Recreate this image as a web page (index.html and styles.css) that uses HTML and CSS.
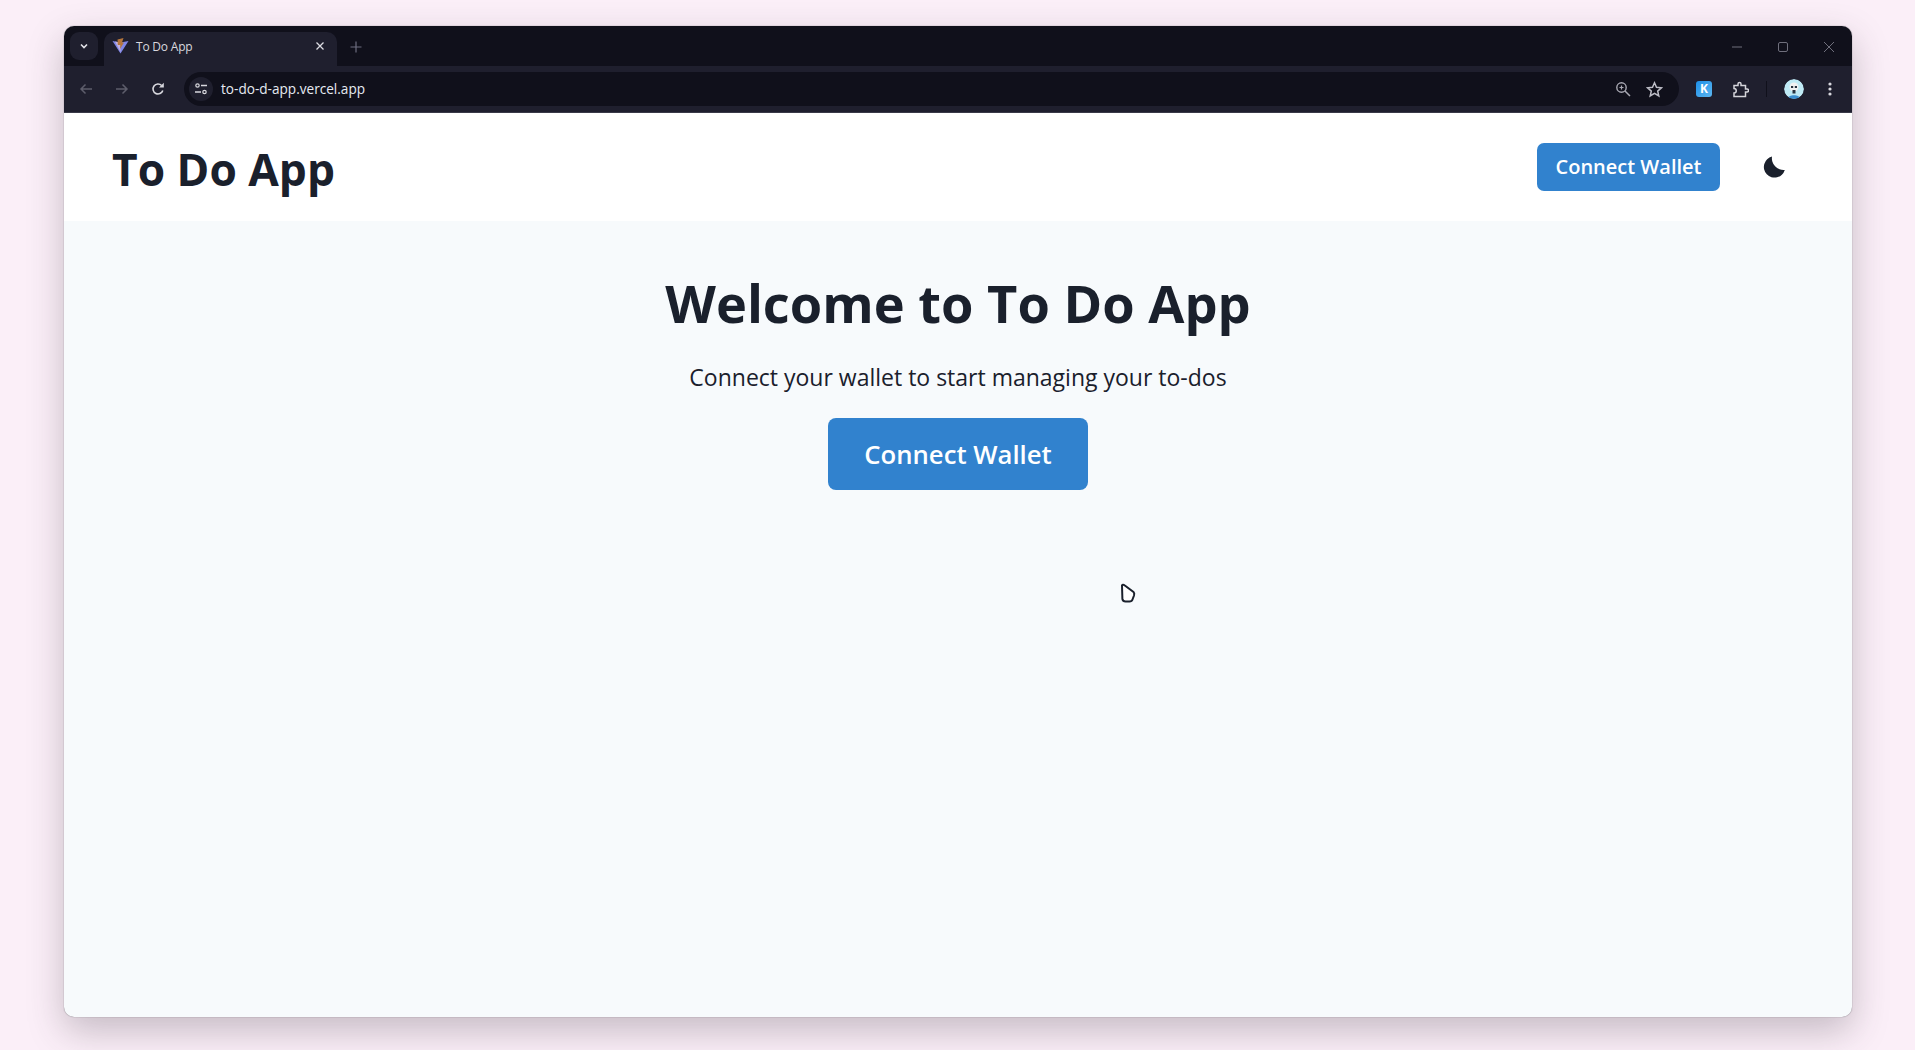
FILE: index.html
```html
<!DOCTYPE html>
<html lang="en">
<head>
<meta charset="utf-8">
<title>To Do App</title>
<link rel="stylesheet" href="styles.css">
</head>
<body>
<div class="window">
  <div class="titlebar">
    <div class="tab-search"><svg width="10" height="10" viewBox="0 0 10 10"><path d="M2 3.500 5 6.500 8 3.500" fill="none" stroke="#e4e4ea" stroke-width="1.600"/></svg></div>
    <div class="tab">
      <svg class="favicon" width="17" height="16" viewBox="0 0 17 16"><path d="M0.500 3 8.500 4.500 16.500 3 8.500 15.500Z" fill="#7f86e8"/><path d="M3 3.500 8.500 4.500 8.500 14Z" fill="#c4b2dc"/><path d="M5.500 1.500 11.500 0 10 4.500 12 4.500 8 11 8.300 7 5.800 7Z" fill="#b5763c"/></svg>
      <span class="tab-title">To Do App</span>
      <svg class="tab-close" width="10" height="10" viewBox="0 0 10 10"><path d="M1.500 1.500 8.500 8.500M8.500 1.500 1.500 8.500" stroke="#dcdce2" stroke-width="1.300"/></svg>
    </div>
    <svg class="new-tab" width="12" height="12" viewBox="0 0 12 12"><path d="M6 .5V11.500M.5 6H11.500" stroke="#6d6d80" stroke-width="1.200"/></svg>
    <div class="win-controls">
      <svg width="12" height="12" viewBox="0 0 12 12"><path d="M1 6H11" stroke="#6f6f7c" stroke-width="1"/></svg>
      <svg width="12" height="12" viewBox="0 0 12 12"><rect x="1.500" y="1.500" width="9" height="9" rx="1.500" fill="none" stroke="#6f6f7c"/></svg>
      <svg width="12" height="12" viewBox="0 0 12 12"><path d="M1 1 11 11M11 1 1 11" stroke="#6f6f7c"/></svg>
    </div>
  </div>
  <div class="toolbar">
    <svg class="nav nav-back" width="16" height="16" viewBox="0 0 16 16"><path d="M14 8H3M7.500 3.500 3 8l4.500 4.500" fill="none" stroke="#5d5d6b" stroke-width="1.500"/></svg>
    <svg class="nav nav-forward" width="16" height="16" viewBox="0 0 16 16"><path d="M2 8H13M8.500 3.500 13 8l-4.500 4.500" fill="none" stroke="#5d5d6b" stroke-width="1.500"/></svg>
    <svg class="nav nav-reload" width="16" height="16" viewBox="0 0 16 16"><path d="M12.800 9.500A5 5 0 1 1 11.600 4.500" fill="none" stroke="#d8d8de" stroke-width="1.600"/><path d="M9 6.500h4.800V1.800Z" fill="#d8d8de"/></svg>
    <div class="omnibox">
      <div class="site-info"><svg width="16" height="16" viewBox="0 0 16 16"><circle cx="4.500" cy="4.500" r="1.700" fill="none" stroke="#d8d8de" stroke-width="1.200"/><path d="M8 4.500H14M2 11H8" stroke="#d8d8de" stroke-width="1.400"/><circle cx="11.500" cy="11" r="1.700" fill="none" stroke="#d8d8de" stroke-width="1.200"/></svg></div>
      <span class="url">to-do-d-app.vercel.app</span>
      <div class="omni-actions">
        <svg width="16" height="16" viewBox="0 0 16 16"><circle cx="6.500" cy="6.500" r="4.700" fill="none" stroke="#a9a9b3" stroke-width="1.400"/><path d="M10 10 15 15" stroke="#a9a9b3" stroke-width="1.500"/><path d="M4.500 6.500H8.500M6.500 4.500V8.500" stroke="#a9a9b3" stroke-width="1.200"/></svg>
        <svg width="17" height="17" viewBox="0 0 17 17"><path d="M8.500 1.800 10.500 6.300 15.400 6.800 11.700 10.100 12.800 15 8.500 12.400 4.200 15 5.300 10.100 1.600 6.800 6.500 6.300Z" fill="none" stroke="#bdbdc6" stroke-width="1.500"/></svg>
      </div>
    </div>
    <div class="ext-k">K</div>
    <svg class="ext-puzzle" width="17" height="17" viewBox="0 0 17 17"><path d="M2 4.500H6V3a1.500 1.500 0 0 1 3 0V4.500H13.500V8H15a1.500 1.500 0 0 1 0 3H13.500V15.500H2V12a1.500 1.500 0 0 0 0-4.500Z" fill="none" stroke="#d4d4da" stroke-width="1.500"/></svg>
    <div class="divider"></div>
    <div class="avatar"><svg width="20" height="20" viewBox="0 0 20 20"><circle cx="10" cy="10" r="10" fill="#bfeaf5"/><path d="M3.500 20C4 15 16 15 16.500 20Z" fill="#3b8fd0"/><circle cx="10" cy="8" r="4.500" fill="#f1f1f1"/><path d="M7 7h2.200v2H7ZM10.800 7H13v2h-2.200ZM8.500 11h3v3.500h-3Z" fill="#27323f"/></svg></div>
    <svg class="menu" width="4" height="14" viewBox="0 0 4 14"><circle cx="2" cy="2" r="1.600" fill="#d8d8de"/><circle cx="2" cy="7" r="1.600" fill="#d8d8de"/><circle cx="2" cy="12" r="1.600" fill="#d8d8de"/></svg>
  </div>
  <header class="app-header">
    <h1 class="app-title">To Do App</h1>
    <div class="header-actions">
      <button class="btn btn-small">Connect Wallet</button>
      <svg class="moon" width="22" height="22" viewBox="0 0 22 22"><path d="M9 .5A10.700 10.700 0 1 0 21.800 14 11.800 11.800 0 0 1 9 .5Z" fill="#1a202c"/></svg>
    </div>
  </header>
  <main class="hero">
    <h2 class="hero-title">Welcome to To Do App</h2>
    <p class="hero-text">Connect your wallet to start managing your to-dos</p>
    <button class="btn btn-large">Connect Wallet</button>
    <svg class="cursor" width="18" height="20" viewBox="0 0 18 20"><path d="M3 2.500C3.500 1.500 4.500 1.500 5.500 2.300L14.500 9C15.500 10 15.500 11 15 12.500L13.500 16.500C13 18 12 18.500 10.500 18.500H6.500C4.500 18.500 3.700 17.500 3.400 16Z" fill="#fff" stroke="#1a202c" stroke-width="2"/></svg>
  </main>
</div>
</body>
</html>
```
FILE: styles.css
```css
* { box-sizing: border-box; }
html, body { margin: 0; height: 100%; }
body {
  background: #fbeff8;
  padding: 26px 63px 33px 64px;
  font-family: "Open Sans", "Noto Sans", sans-serif;
  overflow: hidden;
}
.window {
  height: 991px;
  display: flex;
  flex-direction: column;
  border-radius: 10px;
  overflow: hidden;
  position: relative;
  box-shadow: 0 0 1px rgba(40,30,40,.7), 0 14px 36px rgba(60,50,60,.28);
  background: #f7fafc;
}
.titlebar {
  height: 40px;
  flex: none;
  background: #10101b;
  display: flex;
  align-items: flex-start;
  padding: 6px 0 0 6px;
}
.tab-search {
  width: 28px;
  height: 28px;
  border-radius: 9px;
  background: #1f1f2e;
  display: flex;
  align-items: center;
  justify-content: center;
  flex: none;
}
.tab {
  width: 233px;
  height: 34px;
  margin-left: 6px;
  background: #1f1f2e;
  border-radius: 10px 10px 0 0;
  display: flex;
  align-items: center;
  padding: 0 12px 6px 8px;
  flex: none;
}
.tab-title {
  font: 12px/16px "Open Sans", sans-serif;
  color: #d8d8de;
  margin: 2px 0 0 7px;
  letter-spacing: -.2px;
}
.tab-close { margin-left: auto; }
.new-tab { margin: 9px 0 0 13px; }
.win-controls {
  margin-left: auto;
  margin-top: 9px;
  padding-right: 17px;
  display: flex;
  gap: 34px;
}
.toolbar {
  height: 47px;
  flex: none;
  background: #1f1f2e;
  border-bottom: 1px solid #3a3a48;
  display: flex;
  align-items: center;
  padding: 0 14px 0 14px;
}
.nav { flex: none; }
.nav-forward { margin-left: 20px; }
.nav-reload { margin-left: 20px; }
.omnibox {
  margin-left: 18px;
  width: 1495px;
  height: 34px;
  border-radius: 17px;
  background: #10101b;
  display: flex;
  align-items: center;
  padding: 0 6px 0 5px;
  flex: none;
}
.site-info {
  width: 24px;
  height: 24px;
  border-radius: 50%;
  background: #1f1f2e;
  display: flex;
  align-items: center;
  justify-content: center;
}
.url {
  font: 13.600px/16px "Open Sans", sans-serif;
  color: #e6eaf2;
  margin-left: 8px;
}
.omni-actions {
  margin-left: auto;
  margin-right: 10px;
  display: flex;
  align-items: center;
  gap: 15px;
}
.ext-k {
  margin-left: 17px;
  width: 16px;
  height: 16px;
  border-radius: 3px;
  background: linear-gradient(135deg, #1d8fe8, #5cb6f0);
  color: #fff;
  font: 700 12px/16px "Open Sans", sans-serif;
  text-align: center;
  flex: none;
}
.ext-puzzle { margin-left: 20px; flex: none; }
.divider { width: 1px; height: 16px; background: #10101b; margin-left: 17px; flex: none; }
.avatar { margin-left: 17px; width: 20px; height: 20px; flex: none; border-radius: 50%; overflow: hidden; }
.avatar svg { display: block; }
.menu { margin-left: 24px; flex: none; }
.app-header {
  height: 108px;
  flex: none;
  background: #fff;
  display: flex;
  align-items: center;
  justify-content: space-between;
  padding: 0 67px 0 48px;
}
.app-title {
  margin: 6px 0 0;
  font-size: 44.300px;
  line-height: 1.2;
  font-weight: 700;
  color: #1a202c;
}
.header-actions {
  display: flex;
  align-items: center;
  gap: 43px;
  margin-top: -1px;
}
.btn {
  display: block;
  border: 0;
  background: #3182ce;
  color: #fff;
  font-family: inherit;
  font-weight: 600;
}
.btn-small {
  width: 183px;
  height: 48px;
  border-radius: 7px;
  font-size: 20px;
}
.btn-large {
  width: 260px;
  height: 72px;
  border-radius: 8px;
  font-size: 25.700px;
}
.moon { display: block; }
.hero {
  flex: 1;
  display: flex;
  flex-direction: column;
  align-items: center;
  position: relative;
}
.hero-title {
  margin: 51px 0 0;
  font-size: 52.400px;
  line-height: 1.2;
  font-weight: 700;
  color: #1a202c;
}
.hero-text {
  margin: 25px 0 24px;
  font-size: 23px;
  line-height: 1.5;
  color: #1a202c;
}
.cursor {
  position: absolute;
  left: 1055px;
  top: 362px;
}
```
